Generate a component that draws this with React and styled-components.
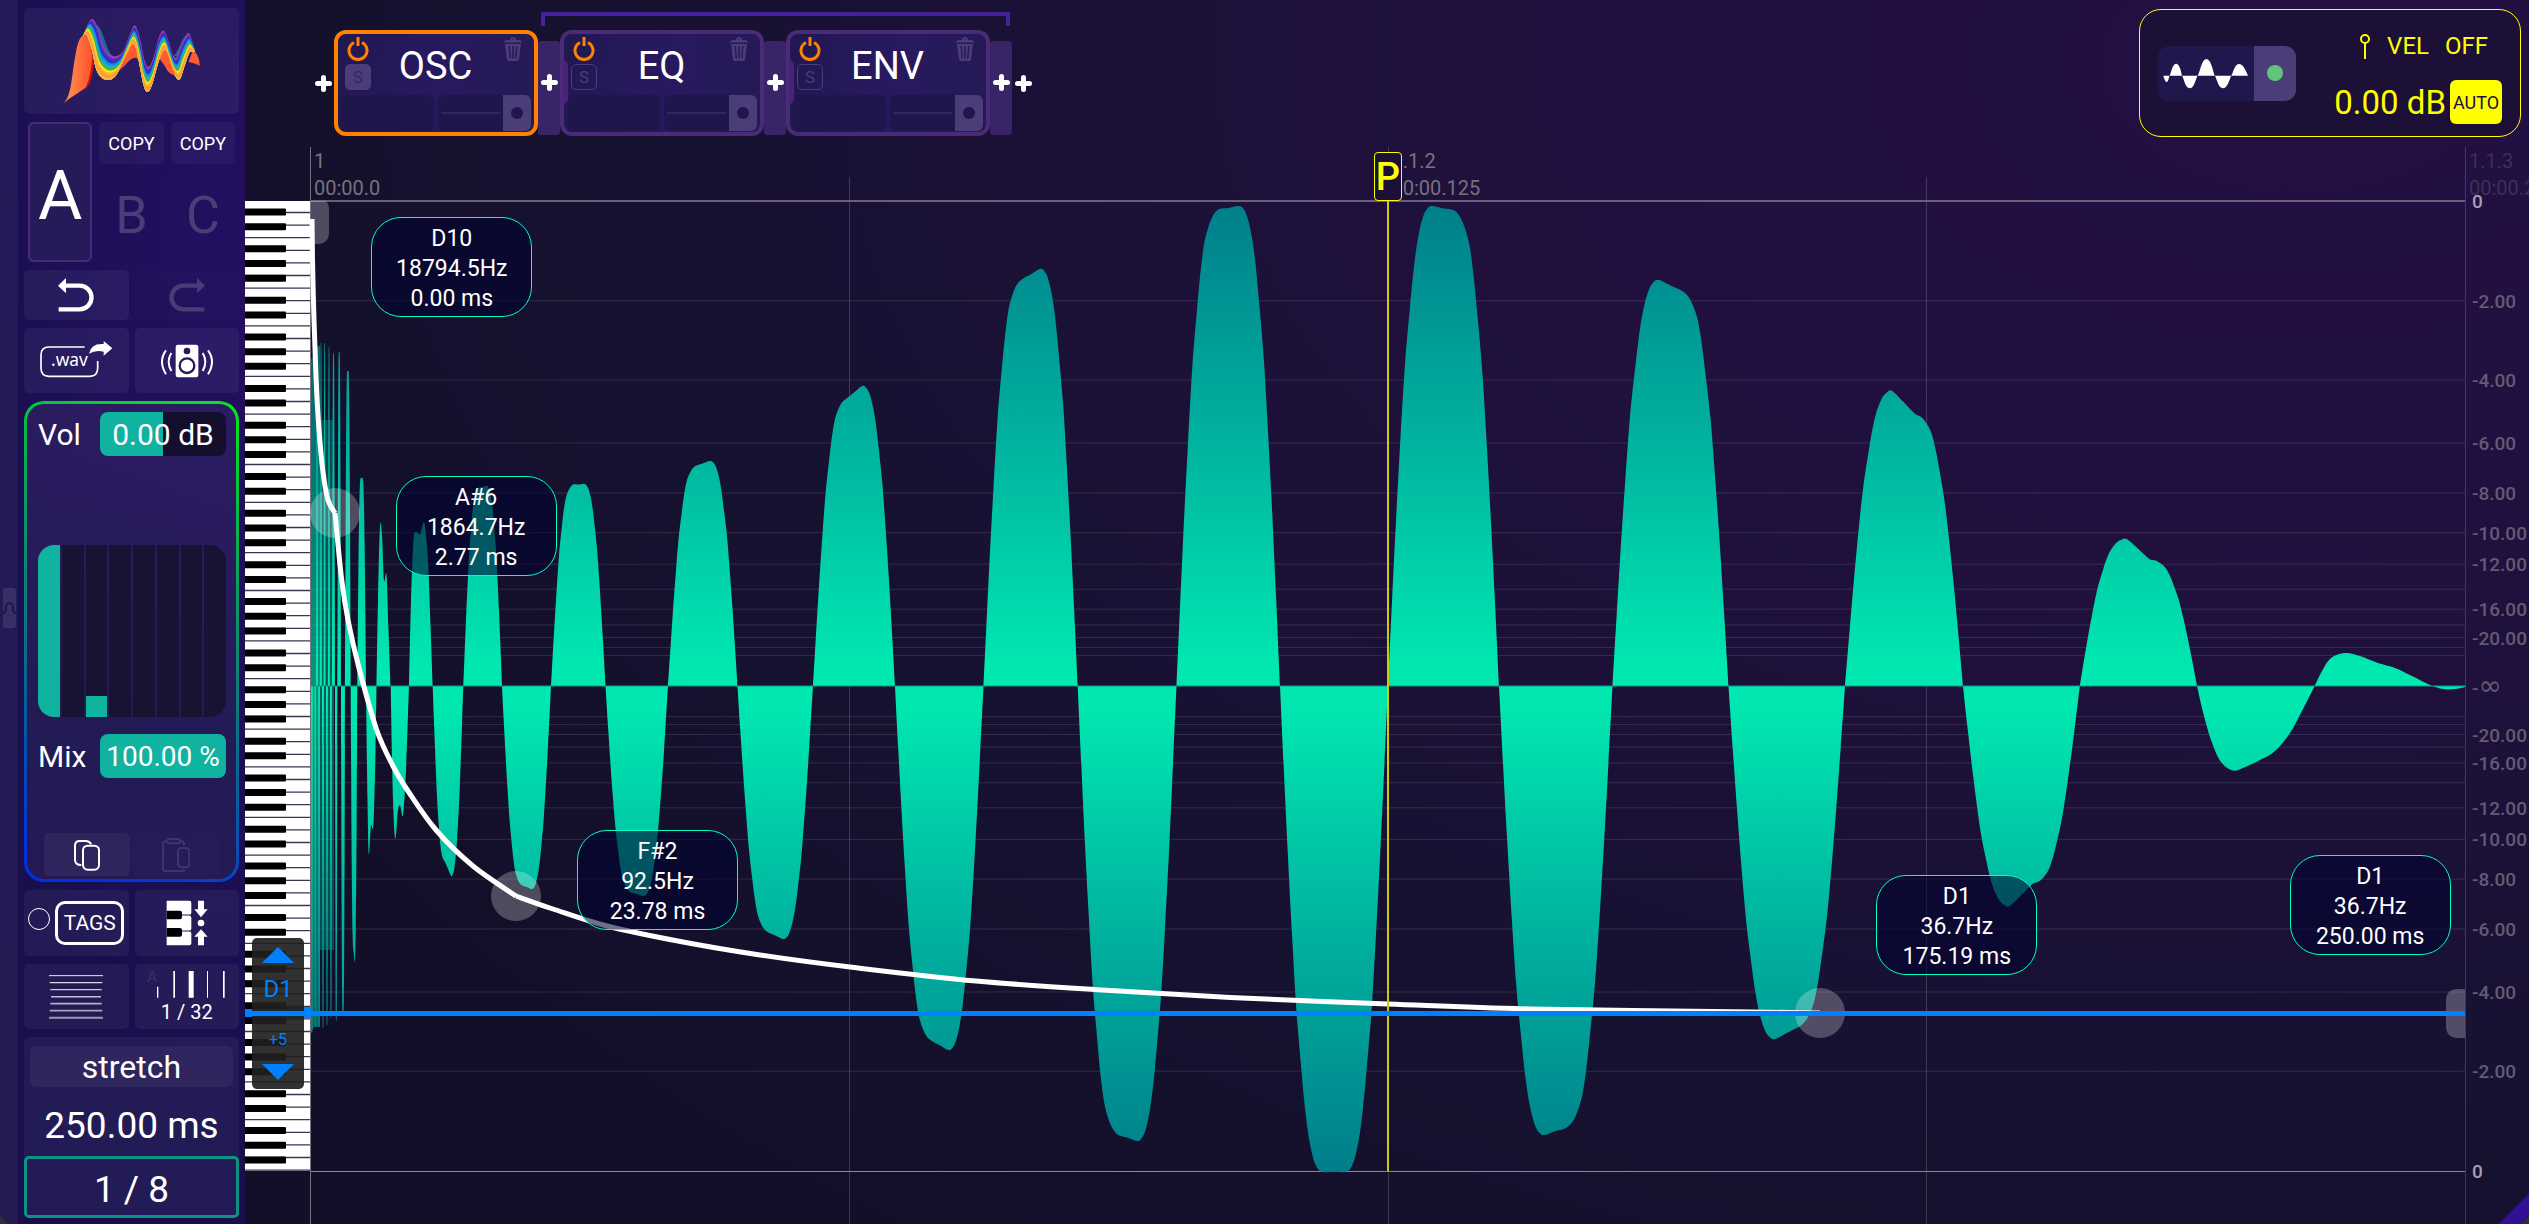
import React, { useState } from "react";
import styled, { createGlobalStyle, css } from "styled-components";

const GlobalStyle = createGlobalStyle`
  * {
    box-sizing: border-box;
  }
  body {
    margin: 0;
    background: #2b2f3c;
    font-family: Roboto, "Liberation Sans", sans-serif;
    color: #fff;
  }
  button,
  input {
    font: inherit;
    color: inherit;
    border: 0;
    padding: 0;
    margin: 0;
    background: none;
  }
  button {
    cursor: pointer;
  }
  svg {
    display: block;
  }
`;

const center = css`
  display: flex;
  align-items: center;
  justify-content: center;
`;

const Window = styled.div`
  display: grid;
  grid-template-columns: 18px 227px 1fr;
  min-height: 100vh;
  overflow: hidden;
  border-radius: 0 0 14px 14px;
  background: #130f28;
`;

/* ---------- left edge ---------- */

const Edge = styled.div`
  ${center}
  padding-bottom: 8px;
  background: linear-gradient(#231b58, #221a50);
`;

const EdgeHandle = styled.button`
  ${center}
  width: 13px;
  height: 40px;
  border-radius: 3px;
  background: #373062;
`;

/* ---------- sidebar ---------- */

const Sidebar = styled.aside`
  display: flex;
  flex-direction: column;
  gap: 8px;
  padding: 8px 6px 6px;
  background: radial-gradient(ellipse 120% 70% at 90% 20%, #230f60, #1e0f58 55%, #180f4c);
`;

const Pair = styled.div`
  display: grid;
  grid-template-columns: 1fr 1fr;
  gap: 6px;
  height: ${(p) => p.$height}px;
`;

const Tile = styled.button`
  ${center}
  gap: 5px;
  border-radius: 5px;
  background: rgba(255, 255, 255, ${(p) => (p.disabled ? 0.01 : 0.05)});
`;

const LogoTile = styled.div`
  ${center}
  height: 106px;
  border-radius: 6px;
  background: rgba(255, 255, 255, 0.05);
`;

const Slots = styled.div`
  display: grid;
  grid-template-columns: repeat(3, 1fr);
  gap: 7px;
  height: 140px;
  padding: 0 4px;
`;

const ActiveSlot = styled.button`
  ${center}
  padding-top: 8px;
  border: 2px solid #4c2a7a;
  border-radius: 6px;
  background: #261b58;
  font-size: 68px;
`;

const Slot = styled.div`
  display: grid;
  grid-template-rows: 42px 1fr;
`;

const CopyButton = styled.button`
  border-radius: 5px;
  background: rgba(255, 255, 255, 0.04);
  font-size: 18px;
`;

const SlotLetter = styled.button`
  padding-top: 4px;
  color: #4a3d78;
  font-size: 52px;
`;

const LevelPanel = styled.section`
  display: flex;
  flex-direction: column;
  flex: 1;
  padding: 8px 10px 3px 11px;
  border: 3px solid transparent;
  border-radius: 20px;
  background: linear-gradient(200deg, #2d1b62, #221b54 70%, #251955) padding-box,
    linear-gradient(205deg, #04e81c, #0a9a62 35%, #0a6a8c 62%, #0030e0 95%) border-box;
`;

const LevelRow = styled.div`
  display: flex;
  align-items: center;
  justify-content: space-between;
  height: 44px;
  font-size: 30px;
`;

const LevelInput = styled.input`
  width: 126px;
  height: 44px;
  border-radius: 8px;
  background: linear-gradient(90deg, #10b3a0 ${(p) => p.$fill}%, #130f2c ${(p) => p.$fill}%);
  font-size: ${(p) => (p.$small ? 28 : 30)}px;
  text-align: center;
`;

const Bars = styled.div`
  display: flex;
  gap: 2px;
  height: 172px;
  margin: 89px 0 17px;
  border-radius: 16px;
  overflow: hidden;
`;

const Bar = styled.div`
  flex: 1;
  background: linear-gradient(0deg, #10b3a0 ${(p) => p.$value}%, #181333 ${(p) => p.$value}%);
`;

const ClipboardRow = styled.div`
  display: grid;
  grid-template-columns: 86px 86px;
  gap: 3px;
  height: 43px;
  margin-top: auto;
  padding-left: 6px;
`;

const TagCheck = styled.input`
  appearance: none;
  width: 22px;
  height: 22px;
  margin-bottom: 8px;
  border: 1px solid #fff;
  border-radius: 50%;
`;

const TagButton = styled.button`
  width: 69px;
  height: 44px;
  border: 3px solid #fff;
  border-radius: 10px;
  font-size: 21px;
`;

const TagTile = styled.div`
  ${center}
  gap: 5px;
  border-radius: 5px;
  background: rgba(255, 255, 255, 0.05);
`;

const SnapTile = styled(Tile)`
  flex-direction: column;
  gap: 1px;
  font-size: 20px;
  line-height: 24px;
`;

const LengthPanel = styled.section`
  display: flex;
  flex-direction: column;
  height: 181px;
  border-radius: 6px;
  background: rgba(255, 255, 255, 0.05);
`;

const StretchButton = styled.button`
  height: 41px;
  margin: 9px 6px 0;
  border-radius: 6px;
  background: rgba(255, 255, 255, 0.05);
  font-size: 32px;
  line-height: 40px;
`;

const LengthInput = styled.input`
  width: 100%;
  flex: 1;
  padding-top: 8px;
  font-size: 37px;
  text-align: center;
`;

const FractionButton = styled.button`
  height: 62px;
  padding-top: 4px;
  border: 3px solid #0e9284;
  border-radius: 5px;
  font-size: 37px;
`;

/* ---------- editor ---------- */

const Editor = styled.main`
  position: relative;
  display: flex;
  flex-direction: column;
  min-width: 0;
  overflow: hidden;
  background: radial-gradient(
    ellipse 100% 120% at 90% 5%,
    #240f43 0,
    #20103e 35%,
    #1a1135 60%,
    #15112e 80%,
    #140f29 100%
  );
`;

const Header = styled.header`
  display: flex;
  justify-content: space-between;
  height: 147px;
  padding: 9px 8px 0 67px;
`;

const Chain = styled.div`
  display: flex;
  align-items: flex-start;
  padding-top: 21px;
`;

const Group = styled.div`
  position: relative;
  display: flex;
`;

const Bracket = styled.div`
  position: absolute;
  top: -18px;
  left: 3px;
  right: 2px;
  height: 14px;
  border: 4px solid #46229a;
  border-bottom: 0;
  border-radius: 2px 2px 0 0;
`;

const AddButton = styled.button`
  ${center}
  width: 22px;
  height: 106px;
`;

const Joint = styled(AddButton)`
  height: 94px;
  margin-top: 11px;
  padding-bottom: 11px;
  border-radius: 3px;
  background: #3a2468;
`;

const Module = styled.section`
  position: relative;
  display: grid;
  grid-template-rows: 1fr 36px;
  width: 204px;
  height: 106px;
  padding: 2px 3px 4px;
  border: 4px solid ${(p) => (p.$active ? "#ff8200" : "#4a2b78")};
  border-radius: 12px;
  background: linear-gradient(100deg, #211850, #28195f 50%, #241a54);
`;

const Notch = styled.div`
  position: absolute;
  left: -1px;
  top: 26px;
  width: 5px;
  height: 44px;
  border-radius: 0 5px 5px 0;
  background: #4c217a;
`;

const ModuleTop = styled.div`
  display: grid;
  grid-template-columns: 28px 1fr 28px;
  padding: 1px 4px 0 3px;
`;

const ModuleSide = styled.div`
  display: flex;
  flex-direction: column;
  align-items: center;
  gap: 3px;
`;

const ModuleTitle = styled.h2`
  margin: 0;
  font-size: 38px;
  font-weight: 400;
  line-height: 58px;
  text-align: center;
`;

const SoloButton = styled.button`
  width: 26px;
  height: 26px;
  border-radius: 5px;
  border: 1px solid #4b3d78;
  background: ${(p) => (p.$filled ? "#4b3d78" : "transparent")};
  color: ${(p) => (p.$filled ? "#33285f" : "#4b3d78")};
  font-size: 17px;
  line-height: 24px;
`;

const ModuleBottom = styled.div`
  display: grid;
  grid-template-columns: 1fr 1fr;
  gap: 4px;
`;

const Cell = styled.div`
  display: flex;
  align-items: center;
  overflow: hidden;
  border-radius: 6px;
  background: #1f174b;
`;

const CellLine = styled.div`
  flex: 1;
  height: 2px;
  margin: 0 3px;
  background: #32285a;
`;

const CellKnob = styled.button`
  ${center}
  width: ${(p) => p.$width}px;
  height: 100%;
  background: #4b3d78;

  &::after {
    content: "";
    width: ${(p) => p.$dot}px;
    height: ${(p) => p.$dot}px;
    border-radius: 50%;
    background: ${(p) => p.$color};
  }
`;

const Output = styled.section`
  display: flex;
  align-items: center;
  justify-content: space-between;
  width: 382px;
  height: 128px;
  padding: 0 18px 0 18px;
  border: 1px solid #ffff00;
  border-radius: 22px;
  background: #1c1036;
  color: #ffff00;
`;

const WaveSwitch = styled.div`
  display: flex;
  width: 138px;
  height: 55px;
  overflow: hidden;
  border-radius: 11px;
  background: #20174c;
`;

const WaveButton = styled.button`
  flex: 1;
`;

const OutputSide = styled.div`
  display: flex;
  flex-direction: column;
  gap: 19px;
  padding-top: 9px;
`;

const VelRow = styled.div`
  display: flex;
  align-items: center;
  justify-content: flex-end;
  gap: 16px;
  height: 30px;
  padding-right: 14px;
  font-size: 24px;
`;

const GainRow = styled.div`
  display: flex;
  align-items: center;
  gap: 4px;
`;

const GainInput = styled.input`
  width: 114px;
  font-size: 33px;
  text-align: right;
`;

const AutoButton = styled.button`
  width: 52px;
  height: 44px;
  border-radius: 6px;
  background: #ffff00;
  color: #1c1036;
  font-size: 18px;
`;

/* ---------- timeline ---------- */

const Timeline = styled.div`
  position: relative;
  display: flex;
  flex-direction: column;
  flex: 1;
  padding-bottom: 53px;
`;

const BeatLines = styled.div`
  position: absolute;
  inset: 0 63px 0 65px;
  display: grid;
  grid-template-columns: repeat(4, 1fr);
  border-left: 1px solid #77727f;
`;

const Beat = styled.div`
  margin-top: ${(p) => (p.$minor ? 30 : 0)}px;
  border-right: 1px solid rgba(255, 255, 255, 0.17);
`;

const Ruler = styled.div`
  display: grid;
  grid-template-columns: 1fr 1fr 64px;
  height: 54px;
  padding: 1px 0 0 65px;
  overflow: hidden;
`;

const Tick = styled.div`
  padding-left: 4px;
  color: ${(p) => (p.$dim ? "#3c2f52" : "#77737c")};
  font-size: 20px;
  line-height: 27px;
  white-space: nowrap;
`;

const Body = styled.div`
  position: relative;
  display: grid;
  grid-template-columns: 66px 1fr 64px;
  flex: 1;
`;

const Keyboard = styled.div`
  position: relative;
`;

const fill = css`
  position: absolute;
  inset: 0;
  width: 100%;
  height: 100%;
`;

const KeySvg = styled.svg`
  ${fill}
`;

const PlotSvg = styled.svg`
  ${fill}
  overflow: visible;
`;

const Plot = styled.div`
  position: relative;
`;

const NotePicker = styled.div`
  position: absolute;
  top: 76%;
  left: 7px;
  display: flex;
  flex-direction: column;
  align-items: center;
  justify-content: space-between;
  width: 52px;
  height: 151px;
  padding: 9px 0;
  border-radius: 5px;
  background: rgba(32, 32, 32, 0.92);
  color: #0080ff;
`;

const NoteName = styled.span`
  padding-top: 2px;
  font-size: ${(p) => (p.$small ? 16 : 24)}px;
  line-height: 20px;
`;

const NoteLine = styled.div`
  position: absolute;
  top: ${(p) => p.$y}%;
  left: 0;
  right: 64px;
  height: 5px;
  margin-top: -2px;
  background: #0080ff;
`;

const Playhead = styled.div`
  position: absolute;
  left: 50%;
  top: 0;
  bottom: 0;
  width: 2px;
  margin-left: -1px;
  background: #cfc80c;
`;

const PlayheadTag = styled.button`
  position: absolute;
  left: -13px;
  bottom: 100%;
  width: 28px;
  height: 49px;
  padding-top: 2px;
  border: 1px solid #ffff00;
  border-radius: 4px;
  background: #1c1036;
  color: #ffff00;
  font-size: 38px;
  font-weight: 500;
  line-height: 45px;
`;

const Tip = styled.div`
  position: absolute;
  left: ${(p) => p.$x}%;
  top: ${(p) => p.$y}%;
  width: 161px;
  padding: 6px 0 2px;
  border: 1px solid #00ffc2;
  border-radius: 30px;
  background: rgba(0, 2, 48, 0.57);
  font-size: 23px;
  line-height: 30px;
  text-align: center;
`;

const Scale = styled.div`
  position: relative;
`;

const ScaleLabel = styled.span`
  position: absolute;
  left: 7px;
  top: ${(p) => p.$y}%;
  margin-top: -10px;
  color: ${(p) => (p.$strong ? "#a79fb3" : "#635a74")};
  font-size: 19px;
  font-weight: 500;
  line-height: 22px;
`;

const Infinite = styled.span`
  font-family: "DejaVu Sans", sans-serif;
  font-size: 28px;
  font-weight: 400;
  line-height: 20px;
`;

const Corner = styled.div`
  position: absolute;
  right: 0;
  bottom: 0;
  width: 30px;
  height: 30px;
  background: linear-gradient(135deg, transparent 50%, #300f92 50%);
`;

/* ---------- drawing helpers ---------- */

const toCurve = (pts) => {
  let d = "";
  for (let i = 0; i < pts.length - 1; i++) {
    const p0 = pts[i - 1] || pts[i];
    const p1 = pts[i];
    const p2 = pts[i + 1];
    const p3 = pts[i + 2] || p2;
    d += `C${(p1[0] + (p2[0] - p0[0]) / 6).toFixed(1)} ${(p1[1] + (p2[1] - p0[1]) / 6).toFixed(1)} `;
    d += `${(p2[0] - (p3[0] - p1[0]) / 6).toFixed(1)} ${(p2[1] - (p3[1] - p1[1]) / 6).toFixed(1)} `;
    d += `${p2[0].toFixed(1)} ${p2[1].toFixed(1)}`;
  }
  return d;
};

const MID = 686;
const HALF = 485;

// rise of one half wave: [part of width, part of height]
const RISE = [
  [0, 0],
  [0.037, 0.18],
  [0.071, 0.34],
  [0.112, 0.515],
  [0.153, 0.67],
  [0.198, 0.79],
  [0.232, 0.87],
  [0.268, 0.93],
];
const PEAK = [...RISE, [0.312, 0.975], [0.355, 0.995], [0.4, 1]];
const SHOULDER = [...RISE, [0.312, 0.967], [0.355, 0.989], [0.41, 1.002]];

// [start, end, y of left shoulder, y of right shoulder]
const LOBES = [
  [316, 318, 346, 346],
  [320, 322, 343, 343],
  [323.6, 325.6, 343, 343],
  [328, 330, 347, 347],
  [332, 335, 353, 353],
  [337.4, 341, 352, 352],
  [345, 350.7, 371, 371],
  [357.3, 366, 478, 478],
  [463.3, 502, 488, 486],
  [551, 605.5, 485, 484],
  [668, 737.5, 466, 461],
  [813, 895, 399, 386],
  [983.5, 1077.7, 280, 269],
  [1176.5, 1280, 210, 206],
  [1388, 1499, 206, 211],
  [1612.5, 1728.5, 280, 291],
  [1845, 1963, 391, 414],
  [2079.8, 2197, 539, 559],
  [311, 313, 1033, 1033],
  [314.4, 316, 1027, 1027],
  [318.2, 320, 1027, 1027],
  [322, 324, 1028, 1028],
  [326, 328, 1025, 1025],
  [330, 332, 1018, 1018],
  [335, 337.4, 1021, 1021],
  [341, 345, 1012, 1012],
  [350.7, 357.3, 950, 962],
  [432.7, 463.3, 862, 876],
  [502, 551, 885, 889],
  [605.5, 668, 892, 896],
  [737.5, 813, 932, 939],
  [895, 983.5, 1040, 1050],
  [1077.7, 1176.5, 1134, 1141],
  [1280, 1388, 1172, 1172],
  [1499, 1612.5, 1135, 1127],
  [1728.5, 1845, 1039, 1027],
  [1963, 2079.8, 906, 884],
];

// half waves with a shape of their own
const CUSTOM = [
  [[376.5, 686], [378, 600], [380, 527], [382, 535], [384, 580], [386.5, 575], [388.5, 630], [390.5, 686]],
  [[409, 686], [411, 600], [413.5, 540], [416, 532], [420, 534], [424.3, 523], [428, 560], [430.5, 625], [432.7, 686]],
  [[366, 686], [367.5, 800], [368.8, 854], [371, 826], [373.5, 824], [375.5, 750], [376.5, 686]],
  [[390.7, 686], [393, 800], [395.3, 839], [398, 810], [400.3, 806], [403, 815], [406, 770], [409, 686]],
  [[2197, 686], [2203, 712], [2211, 740], [2221, 762], [2233, 770.5], [2243, 768], [2260, 760], [2275, 751], [2290, 733], [2303, 709], [2314.7, 686]],
  [[2314.7, 686], [2322, 671], [2331, 658], [2345, 653], [2360, 656], [2378, 663], [2395, 668], [2412, 676], [2430, 685], [2443, 689], [2455, 689], [2465, 687], [2465, 686]],
];

const lobePath = ([x0, x1, yl, yr]) => {
  const w = x1 - x0;
  const leftHigher = Math.abs(yl - MID) >= Math.abs(yr - MID);
  const rightHigher = Math.abs(yr - MID) >= Math.abs(yl - MID);
  const left = (leftHigher ? PEAK : SHOULDER).map(([u, f]) => [x0 + u * w, MID + (yl - MID) * f]);
  const right = (rightHigher ? PEAK : SHOULDER).map(([u, f]) => [x1 - u * w, MID + (yr - MID) * f]).reverse();
  const pts = [...left, [x0 + w / 2, (yl + yr) / 2], ...right];
  return `M${x0} ${MID}${toCurve(pts)}Z`;
};

const wavePath =
  LOBES.map(lobePath).join("") +
  CUSTOM.map((pts) => `M${pts[0].join(" ")}${toCurve(pts)}Z`).join("");

const PITCH_PARTS = [
  [[312, 219], [312.5, 260], [314, 320], [316, 377], [319, 430], [323, 472], [328, 500], [335, 513]],
  [[335, 513], [341.7, 580], [348, 620], [359, 668], [376.7, 730], [393, 766], [408, 791], [436, 830], [473, 866], [516, 896]],
  [[516, 896], [553, 909], [607, 926], [683, 942], [760, 955], [850, 967], [976, 981], [1102, 990], [1242, 998], [1388, 1004], [1531, 1009], [1753, 1012], [1820, 1013]],
];
const pitchPath = PITCH_PARTS.map((pts) => `M${pts[0].join(" ")}${toCurve(pts)}`).join("");

const DB_LINES = [-2, -4, -6, -8, -10, -12, -14, -16, -18, -20, -22, -24];
const LABELS = [0, -2, -4, -6, -8, -10, -12, -16, -20];
const level = (db) => Math.pow(10, db / 20);

const TIPS = [
  { note: "D10", hz: "18794.5Hz", time: "0.00 ms", x: 2.8, y: 1.65 },
  { note: "A#6", hz: "1864.7Hz", time: "2.77 ms", x: 3.93, y: 28.35 },
  { note: "F#2", hz: "92.5Hz", time: "23.78 ms", x: 12.35, y: 64.8 },
  { note: "D1", hz: "36.7Hz", time: "175.19 ms", x: 72.67, y: 69.5 },
  { note: "D1", hz: "36.7Hz", time: "250.00 ms", x: 91.86, y: 67.4 },
];

/* ---------- icons ---------- */

const Plus = () => (
  <svg width="17" height="17" viewBox="0 0 17 17">
    <path d="M8.500 2.500v12M2.500 8.500h12" stroke="#fff" strokeWidth="5" strokeLinecap="round" />
  </svg>
);

const Power = () => (
  <svg width="22" height="24" viewBox="0 0 22 24" fill="none" stroke="#ff8200" strokeWidth="3">
    <path d="M7 5.500A9 9 0 1 0 15 5.500M11 0v9" />
  </svg>
);

const Trash = () => (
  <svg width="18" height="24" viewBox="0 0 18 24" fill="#4b3d78">
    <path d="M0 5.500Q0 3 3 3h3Q6 0 9 0t3 3h3q3 0 3 2.500zM8 2.500h2Q10 1.500 9 1.500T8 2.500zM1 7h16l-2 15q-.3 2-2 2H5q-1.700 0-2-2zM4.500 9l1 12.500H7L6 9zM8.200 9v12.500h1.600V9zM12 9l-1 12.500h1.500l1-12.500z" fillRule="evenodd" />
  </svg>
);

const LOGO_TOP = [
  [255, 104], [264, 72], [277, 57], [292, 78], [312, 140], [340, 168], [368, 156], [388, 108], [405, 76],
  [421, 118], [434, 180], [447, 200], [462, 168], [477, 112], [492, 92], [508, 128], [520, 166], [531, 170],
  [547, 128], [566, 99], [577, 122], [585, 150],
];
const LOGO_BOTTOM = [
  [245, 112], [252, 106], [262, 108], [276, 150], [292, 215], [320, 240], [350, 224], [382, 160], [400, 132],
  [414, 170], [432, 258], [445, 275], [458, 250], [478, 180], [495, 150], [508, 185], [526, 228], [540, 238],
  [552, 205], [568, 160], [578, 155], [586, 157],
];
const LOGO_COLORS = ["#9b3cb0", "#4a30b8", "#2438c8", "#1e86e8", "#18b0c8", "#3cb83c", "#ffe020", "#ffb030", "#f0a030", "#ffac50"];

const band = (i) => {
  const at = (t) => LOGO_TOP.map(([x, y], k) => [x + (LOGO_BOTTOM[k][0] - x) * t, y + (LOGO_BOTTOM[k][1] - y) * t]);
  const a = at(i / LOGO_COLORS.length);
  const b = at(1).reverse();
  return `M${a[0].join(" ")}${toCurve(a)}L${b[0].join(" ")}${toCurve(b)}Z`;
};

const Logo = () => (
  <svg width="215" height="106" viewBox="73 24 644 318">
    <defs>
      <linearGradient id="flap" x1="0" x2="1">
        <stop offset="0" stopColor="#ff9858" />
        <stop offset="1" stopColor="#ff5028" />
      </linearGradient>
    </defs>
    <path d="M290 75C312 85 316 150 340 170L325 172C308 160 300 110 290 75zM566 99C545 110 540 150 520 170L545 165z" fill="#1a6aa0" />
    <path d="M262 180L277 165 282 190Q276 250 258 266L240 262z" fill="#d01408" />
    <path d="M190 311C215 290 215 230 226 170 234 120 242 104 260 106 268 112 274 140 278 172 272 215 268 245 256 264 236 280 210 292 190 311z" fill="url(#flap)" />
    <path d="M345 225C375 205 380 140 400 128 412 132 414 160 420 190 405 150 385 190 345 225zM478 175C486 150 500 140 512 165L530 195 540 238C525 225 505 220 500 205zM566 186L578 154Q598 158 600 197 585 190 566 186z" fill="#ff5a30" />
    {LOGO_COLORS.map((color, i) => (
      <path key={color} d={band(i)} fill={color} />
    ))}
    <path d="M398 132Q405 130 412 165C404 150 392 170 372 202 384 180 388 138 398 132zM495 150Q505 155 512 190L526 225Q505 222 497 200 490 175 486 168 490 152 495 150z" fill="#ff5a30" />
  </svg>
);

const Undo = ({ flip, color = "#fff" }) => (
  <svg width="36" height="34" viewBox="0 0 108 102" fill="none">
    <g transform={flip ? "translate(108 0) scale(-1 1)" : undefined}>
      <path d="M20 23H65A35 35 0 0 1 65 94H2" stroke={color} strokeWidth="13" />
      <path d="M0 23L24 0V46z" fill={color} />
    </g>
  </svg>
);

const WavExport = () => (
  <svg width="74" height="44" viewBox="0 0 222 132" fill="none" stroke="#fff" strokeWidth="5">
    <path d="M137 24H30Q6 24 6 48V88Q6 112 30 112H152Q176 112 176 88V66" />
    <path d="M150 44Q156 12 194 15V6L220 28 194 50V38Q170 32 150 44z" fill="#fff" stroke="none" />
    <text x="36" y="82" fill="#fff" stroke="none" fontFamily="Noto Sans, sans-serif" fontSize="52">
      .wav
    </text>
  </svg>
);

const Speaker = () => (
  <svg width="54" height="36" viewBox="0 0 162 108">
    <path d="M54 5H108Q115 5 115 12V96Q115 103 108 103H54Q47 103 47 96V12Q47 5 54 5z" fill="#fff" />
    <circle cx="81" cy="24" r="10" fill="#261b5a" />
    <circle cx="81" cy="68" r="22" fill="none" stroke="#261b5a" strokeWidth="7" />
    <path d="M34 30Q18 55 34 84M18 22Q-6 55 18 94M128 30Q144 55 128 84M144 22Q168 55 144 94" fill="none" stroke="#fff" strokeWidth="6" />
  </svg>
);

const CopyIcon = () => (
  <svg width="28" height="32" viewBox="0 0 84 96" fill="none" stroke="#fff" strokeWidth="6">
    <path d="M25 78H22Q6 76 6 62V20Q6 6 20 6H40Q52 8 54 16" />
    <rect x="30" y="20" width="48" height="72" rx="14" />
  </svg>
);

const PasteIcon = () => (
  <svg width="28" height="34" viewBox="0 0 84 102" fill="none" stroke="#41346c" strokeWidth="6">
    <path d="M16 10H10Q3 12 3 20V92Q3 99 10 99H60Q66 99 68 94M54 10H60Q67 12 67 22" />
    <rect x="16" y="3" width="38" height="13" rx="6" />
    <rect x="48" y="30" width="34" height="58" rx="10" />
  </svg>
);

const ScaleKeys = () => (
  <svg width="42" height="46" viewBox="0 0 126 138">
    <path d="M2 2H70Q76 2 76 8V38Q76 44 70 46 76 48 76 54V86Q76 92 70 93 76 95 76 100V130Q76 136 70 136H2z" fill="#fff" />
    <path d="M2 32H42Q48 32 48 38V52Q48 58 42 58H2zM2 84H42Q48 84 48 90V104Q48 110 42 110H2z" fill="#000" />
    <path d="M48 45H74M48 93H74" stroke="#251955" strokeWidth="3" />
    <path d="M96 2H114V28H125L105 52 85 28H96zM96 136H114V110H125L105 88 85 110H96z" fill="#fff" />
    <circle cx="105" cy="69" r="10" fill="#fff" />
  </svg>
);

const GridIcon = () => (
  <svg width="56" height="46" viewBox="0 0 168 138" stroke="#fff">
    {[0, 1, 2, 3, 4, 5, 6].map((i) => {
      const inset = 3 + (3 - Math.abs(3 - i)) * 2;
      return (
        <line key={i} x1={inset} x2={168 - inset} y1={5 + i * 21} y2={5 + i * 21} strokeWidth={3 + i * 0.5} opacity={0.9 - i * 0.06} />
      );
    })}
  </svg>
);

const SnapIcon = () => (
  <svg width="80" height="30" viewBox="0 0 240 90" fill="#fff">
    <text x="0" y="38" fill="#3d3266" fontSize="46">
      A
    </text>
    <path d="M30 53h4v33h-4zM79 6h5v80h-5zM125 6h15v80h-15zM180 6h3v80h-3zM228 6h5v80h-5z" />
  </svg>
);

const Pin = () => (
  <svg width="12" height="27" viewBox="0 0 12 27" fill="none" stroke="#ffff00" strokeWidth="2">
    <circle cx="6" cy="6" r="4" />
    <path d="M6 10v16" />
  </svg>
);

const MiniWave = () => (
  <svg width="96" height="55" viewBox="0 0 288 165" fill="#fff">
    <path d="M16 89H270C262 70 255 54 243 54 228 54 224 89 219 89 214 106 206 127 195 127 180 127 174 89 170 89 164 70 158 39 145 39 130 39 124 89 118 89 112 106 106 127 96 127 80 127 76 89 72 89 68 70 64 53 54 53 42 53 38 89 34 89 32 100 30 108 26 108 22 108 18 96 16 89z" />
  </svg>
);

const Triangle = ({ down }) => (
  <svg width="32" height="16" viewBox="0 0 32 16" fill="#0080ff">
    <path d={down ? "M0 0h32L16 16z" : "M0 16h32L16 0z"} />
  </svg>
);

/* ---------- parts ---------- */

const SEMITONE = 970 / 132;
const BLACK = [1, 3, 6, 8, 10];

const Keys = () => {
  const lines = Array.from({ length: 77 }, (_, i) => 11.5 + i * 12.6);
  const blacks = [];
  for (let octave = 0; octave < 11; octave++) {
    BLACK.forEach((k) => blacks.push((octave * 12 + k) * SEMITONE));
  }
  return (
    <KeySvg viewBox="0 0 66 970" preserveAspectRatio="none">
      <rect width="65" height="970" fill="#fff" />
      {lines.map((y) => (
        <path key={y} d={`M0 ${y}H65`} stroke="#3a3550" strokeWidth="1.3" />
      ))}
      <rect y="806" width="66" height="11" fill="#0080ff" />
      {blacks.map((y) => (
        <rect key={y} x="-2" y={y + 0.2} width="43" height="7" rx="1" fill="#000" />
      ))}
      <rect y="808" width="7" height="7" fill="#0080ff" />
    </KeySvg>
  );
};

const ChainModule = ({ name, active }) => {
  const [on, setOn] = useState(true);
  return (
    <Module $active={active}>
      {!active && <Notch />}
      <ModuleTop>
        <ModuleSide>
          <button aria-label={`${name} power`} aria-pressed={on} onClick={() => setOn(!on)}>
            <Power />
          </button>
          <SoloButton $filled={active}>S</SoloButton>
        </ModuleSide>
        <ModuleTitle>{name}</ModuleTitle>
        <ModuleSide>
          <button aria-label={`Delete ${name}`}>
            <Trash />
          </button>
        </ModuleSide>
      </ModuleTop>
      <ModuleBottom>
        <Cell />
        <Cell>
          <CellLine />
          <CellKnob aria-label={`${name} bypass`} $width={28} $dot={12} $color="#1f174b" />
        </Cell>
      </ModuleBottom>
    </Module>
  );
};

const Waveform = () => (
  <PlotSvg viewBox="311 201 2154 970" preserveAspectRatio="none">
    <defs>
      <linearGradient id="wave" gradientUnits="userSpaceOnUse" x1="0" y1="201" x2="0" y2="1171">
        <stop offset="0" stopColor="#007e8a" />
        <stop offset="0.25" stopColor="#00b3a0" />
        <stop offset="0.48" stopColor="#00e8b0" />
        <stop offset="0.52" stopColor="#00e8b0" />
        <stop offset="0.75" stopColor="#00b3a0" />
        <stop offset="1" stopColor="#007e8a" />
      </linearGradient>
    </defs>
    <g stroke="#fff" opacity="0.11">
      {DB_LINES.map((db) => (
        <path key={db} d={`M311 ${MID - HALF * level(db)}H2465M311 ${MID + HALF * level(db)}H2465`} />
      ))}
    </g>
    <path d="M311 201H2465" stroke="#6a607c" strokeWidth="2" />
    <path d="M311 1171.500H2465" stroke="#8b8694" />
    <path d="M311 1033V360L318 346H320V1027H314z" fill="url(#wave)" opacity="0.6" />
    <path d="M320 686V420H334V950H320z" fill="url(#wave)" opacity="0.35" />
    <path d={wavePath} fill="url(#wave)" />
    <path d="M311 686H2465" stroke="#04a088" />
    <g fill="#fff" opacity="0.25">
      <path d="M311 201H325Q329 203 329 210V232Q329 244 317 244H311z" />
      <circle cx="335" cy="513" r="25" />
      <circle cx="516" cy="896" r="25" />
      <circle cx="1820" cy="1013" r="25" />
      <path d="M2465 989H2458Q2446 989 2446 1001V1026Q2446 1038 2458 1038H2465z" />
    </g>
    <path d={pitchPath} fill="none" stroke="#fff" strokeWidth="5" />
  </PlotSvg>
);

const App = () => {
  const [vol, setVol] = useState("0.00 dB");
  const [mix, setMix] = useState("100.00 %");
  const [length, setLength] = useState("250.00 ms");
  const [gain, setGain] = useState("0.00 dB");

  return (
    <>
      <GlobalStyle />
      <Window>
        <Edge>
          <EdgeHandle aria-label="Open panel">
            <svg width="13" height="14" viewBox="0 0 13 14" fill="none" stroke="#1c1550" strokeWidth="2">
              <path d="M0 12Q3 12 3 7T6.500 2 10 7t3 5" />
            </svg>
          </EdgeHandle>
        </Edge>

        <Sidebar>
          <LogoTile>
            <Logo />
          </LogoTile>
          <Slots>
            <ActiveSlot>A</ActiveSlot>
            {["B", "C"].map((slot) => (
              <Slot key={slot}>
                <CopyButton>COPY</CopyButton>
                <SlotLetter>{slot}</SlotLetter>
              </Slot>
            ))}
          </Slots>
          <Pair $height={50}>
            <Tile aria-label="Undo">
              <Undo />
            </Tile>
            <Tile aria-label="Redo" disabled>
              <Undo flip color="#493c75" />
            </Tile>
          </Pair>
          <Pair $height={65}>
            <Tile aria-label="Export wav">
              <WavExport />
            </Tile>
            <Tile aria-label="Preview">
              <Speaker />
            </Tile>
          </Pair>

          <LevelPanel>
            <LevelRow>
              <label htmlFor="vol">Vol</label>
              <LevelInput id="vol" $fill={50} value={vol} onChange={(e) => setVol(e.target.value)} />
            </LevelRow>
            <Bars>
              {[100, 0, 12, 0, 0, 0, 0, 0].map((value, i) => (
                <Bar key={i} $value={value} />
              ))}
            </Bars>
            <LevelRow>
              <label htmlFor="mix">Mix</label>
              <LevelInput id="mix" $fill={100} $small value={mix} onChange={(e) => setMix(e.target.value)} />
            </LevelRow>
            <ClipboardRow>
              <Tile aria-label="Copy">
                <CopyIcon />
              </Tile>
              <Tile aria-label="Paste" disabled>
                <PasteIcon />
              </Tile>
            </ClipboardRow>
          </LevelPanel>

          <Pair $height={66}>
            <TagTile>
              <TagCheck type="checkbox" aria-label="Show tags" />
              <TagButton>TAGS</TagButton>
            </TagTile>
            <Tile aria-label="Snap to keys">
              <ScaleKeys />
            </Tile>
          </Pair>
          <Pair $height={65}>
            <Tile aria-label="Level grid">
              <GridIcon />
            </Tile>
            <SnapTile>
              <SnapIcon />1 / 32
            </SnapTile>
          </Pair>

          <LengthPanel>
            <StretchButton>stretch</StretchButton>
            <LengthInput aria-label="Length" value={length} onChange={(e) => setLength(e.target.value)} />
            <FractionButton>1 / 8</FractionButton>
          </LengthPanel>
        </Sidebar>

        <Editor>
          <Header>
            <Chain>
              <AddButton aria-label="Add first module">
                <Plus />
              </AddButton>
              <ChainModule name="OSC" active />
              <Group>
                <Bracket />
                <Joint aria-label="Add before EQ">
                  <Plus />
                </Joint>
                <ChainModule name="EQ" />
                <Joint aria-label="Add before ENV">
                  <Plus />
                </Joint>
                <ChainModule name="ENV" />
                <Joint aria-label="Add to group">
                  <Plus />
                </Joint>
              </Group>
              <AddButton aria-label="Add last module">
                <Plus />
              </AddButton>
            </Chain>

            <Output>
              <WaveSwitch>
                <WaveButton aria-label="Output wave">
                  <MiniWave />
                </WaveButton>
                <CellKnob aria-label="Output on" $width={42} $dot={16} $color="#62c47a" />
              </WaveSwitch>
              <OutputSide>
                <VelRow>
                  <Pin />
                  <button>VEL</button>
                  <button>OFF</button>
                </VelRow>
                <GainRow>
                  <GainInput aria-label="Output gain" value={gain} onChange={(e) => setGain(e.target.value)} />
                  <AutoButton>AUTO</AutoButton>
                </GainRow>
              </OutputSide>
            </Output>
          </Header>

          <Timeline>
            <BeatLines>
              <Beat $minor />
              <Beat />
              <Beat $minor />
              <Beat />
            </BeatLines>
            <Ruler>
              <Tick>
                1<br />
                00:00.0
              </Tick>
              <Tick>
                1.1.2
                <br />
                00:00.125
              </Tick>
              <Tick $dim>
                1.1.3
                <br />
                00:00.250
              </Tick>
            </Ruler>
            <Body>
              <Keyboard>
                <Keys />
                <NotePicker>
                  <button aria-label="Note up">
                    <Triangle />
                  </button>
                  <NoteName>D1</NoteName>
                  <span />
                  <NoteName $small>+5</NoteName>
                  <button aria-label="Note down">
                    <Triangle down />
                  </button>
                </NotePicker>
              </Keyboard>
              <Plot>
                <Waveform />
                <Playhead>
                  <PlayheadTag>P</PlayheadTag>
                </Playhead>
                {TIPS.map((tip) => (
                  <Tip key={tip.time} $x={tip.x} $y={tip.y}>
                    <div>{tip.note}</div>
                    <div>{tip.hz}</div>
                    <div>{tip.time}</div>
                  </Tip>
                ))}
              </Plot>
              <Scale>
                {LABELS.map((db) => (
                  <React.Fragment key={db}>
                    <ScaleLabel $strong={db === 0} $y={50 - 50 * level(db)}>
                      {db === 0 ? "0" : db.toFixed(2)}
                    </ScaleLabel>
                    <ScaleLabel $strong={db === 0} $y={50 + 50 * level(db)}>
                      {db === 0 ? "0" : db.toFixed(2)}
                    </ScaleLabel>
                  </React.Fragment>
                ))}
                <ScaleLabel $y={50}>
                  -<Infinite>∞</Infinite>
                </ScaleLabel>
              </Scale>
              <NoteLine $y={83.7} />
            </Body>
          </Timeline>
          <Corner />
        </Editor>
      </Window>
    </>
  );
};

export default App;
